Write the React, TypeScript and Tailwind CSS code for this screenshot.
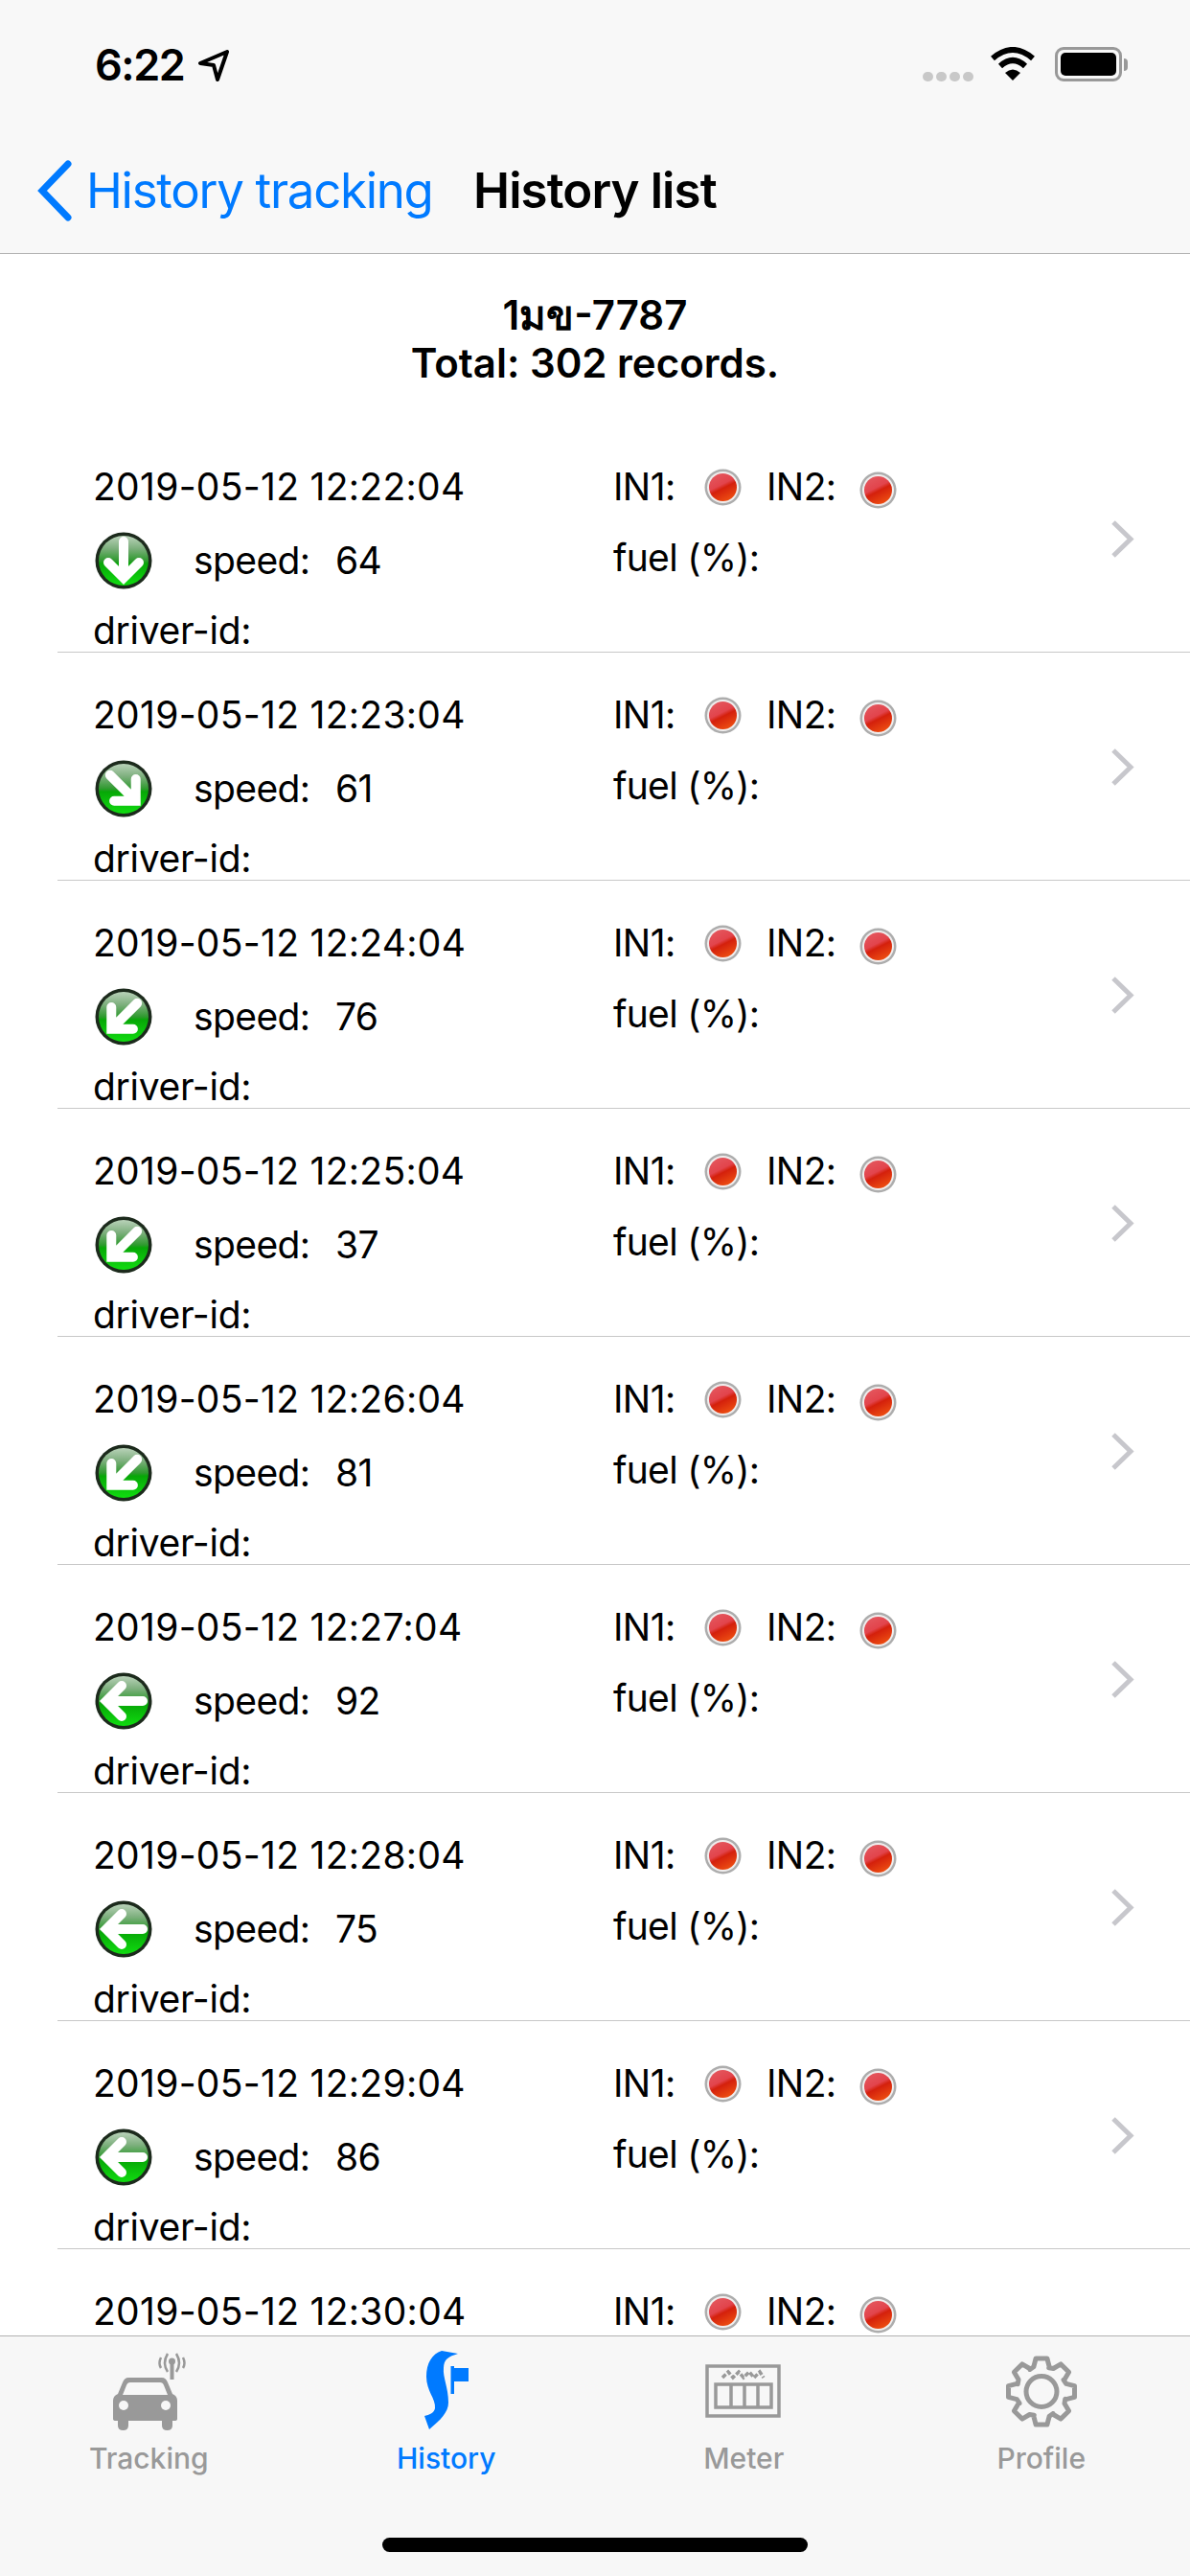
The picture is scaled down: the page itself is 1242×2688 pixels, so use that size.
import React from "react";

const rows = [
  { t: "12:22:04", s: 64, r: 0 },
  { t: "12:23:04", s: 61, r: -45 },
  { t: "12:24:04", s: 76, r: 45 },
  { t: "12:25:04", s: 37, r: 45 },
  { t: "12:26:04", s: 81, r: 45 },
  { t: "12:27:04", s: 92, r: 90 },
  { t: "12:28:04", s: 75, r: 90 },
  { t: "12:29:04", s: 86, r: 90 },
  { t: "12:30:04", s: 0, r: 0 },
];

function Dot() {
  return (
    <svg width="39" height="39" viewBox="0 0 39 39" className="shrink-0">
      <defs>
        <linearGradient id="redg" x1="0.2" y1="0" x2="0.7" y2="1">
          <stop offset="0" stopColor="#e4585f" />
          <stop offset="0.42" stopColor="#e2444c" />
          <stop offset="0.55" stopColor="#d4200c" />
          <stop offset="1" stopColor="#ee5012" />
        </linearGradient>
      </defs>
      <circle cx="19.5" cy="19.5" r="19" fill="#adadad" />
      <circle cx="19.5" cy="19.5" r="16.5" fill="#f0eeee" />
      <circle cx="19.5" cy="19.5" r="14.5" fill="url(#redg)" />
    </svg>
  );
}

function Badge({ rot }: { rot: number }) {
  return (
    <svg width="60" height="60" viewBox="0 0 60 60" className="shrink-0 ml-[2px]">
      <defs>
        <linearGradient id="greeng" x1="0" y1="0" x2="0" y2="1">
          <stop offset="0" stopColor="#b9d2b9" />
          <stop offset="0.25" stopColor="#7fb07f" />
          <stop offset="0.5" stopColor="#2f9a2f" />
          <stop offset="0.56" stopColor="#07a707" />
          <stop offset="1" stopColor="#10dc10" />
        </linearGradient>
      </defs>
      <circle cx="30" cy="30" r="29.5" fill="#1c2a1c" />
      <circle cx="30" cy="30" r="26" fill="url(#greeng)" />
      <g transform={`rotate(${rot} 30 30)`}>
        <path
          d="M30 10 V47 M14 32 L30 48 L46 32"
          fill="none"
          stroke="#ffffff"
          strokeWidth="10"
          strokeLinecap="round"
          strokeLinejoin="miter"
        />
      </g>
    </svg>
  );
}

function Chevron() {
  return (
    <svg width="25" height="41" viewBox="0 0 25 41" className="shrink-0">
      <path d="M3 3 L21 20.5 L3 38" fill="none" stroke="#c7c7cc" strokeWidth="5" />
    </svg>
  );
}

function Row({ t, s, r, partial }: { t: string; s: number; r: number; partial?: boolean }) {
  return (
    <div className="ml-[60px] h-[238px] border-b border-[#c8c8c8] pl-[37px] flex shrink-0">
      <div className="w-[543px] pt-[41px] flex flex-col shrink-0">
        <div className="h-[48px] flex items-center tracking-[0.3px]">2019-05-12 {t}</div>
        {!partial && (
          <>
            <div className="h-[60px] mt-[23px] flex items-center">
              <Badge rot={r} />
              <span className="ml-[43px] w-[148px]">speed:</span>
              <span>{s}</span>
            </div>
            <div className="h-[48px] mt-[19px] flex items-center tracking-[-0.3px]">driver-id:</div>
          </>
        )}
      </div>
      <div className="w-[519px] pt-[41px] flex flex-col shrink-0">
        <div className="h-[48px] flex items-center">
          <span className="w-[95px]">IN1:</span>
          <Dot />
          <span className="ml-[26px] w-[97px]">IN2:</span>
          <span className="mt-[6px]">
            <Dot />
          </span>
        </div>
        {!partial && <div className="h-[48px] mt-[26px] flex items-center tracking-[-0.7px]">fuel (%):</div>}
      </div>
      {!partial && (
        <div className="pt-[99px]">
          <Chevron />
        </div>
      )}
    </div>
  );
}

function Gear() {
  const pts: string[] = [];
  const n = 8;
  const cx = 38;
  const cy = 38.5;
  for (let i = 0; i < n; i++) {
    const a = (i * 2 * Math.PI) / n - Math.PI / 2;
    const w = 0.17;
    const w2 = 0.24;
    const seq: [number, number][] = [
      [27, a - 0.31],
      [35, a - w],
      [35, a + w],
      [27, a + 0.31],
      [26, a + Math.PI / n - w2 + 0.15],
    ];
    seq.forEach(([R, ang]) => {
      pts.push(`${(cx + R * Math.cos(ang)).toFixed(1)},${(cy + R * Math.sin(ang)).toFixed(1)}`);
    });
  }
  return (
    <svg width="76" height="77" viewBox="0 0 76 77">
      <polygon points={pts.join(" ")} fill="none" stroke="#999999" strokeWidth="5" strokeLinejoin="round" />
      <circle cx="38" cy="38.5" r="16" fill="none" stroke="#999999" strokeWidth="5" />
    </svg>
  );
}

export default function App() {
  return (
    <div className="w-[1242px] h-[2688px] flex flex-col overflow-hidden bg-white text-black text-[39px] font-['Inter',sans-serif] tracking-[-0.6px]">
      <header className="h-[265px] shrink-0 bg-[#f8f8f8] border-b border-[#b2b2b2] flex flex-col">
        <div className="h-[154px] shrink-0 pt-[44px] pl-[99px] pr-[65px] flex items-start justify-between">
          <div className="flex items-center h-[48px]">
            <span className="text-[45px] font-semibold tracking-[-1.5px]">6:22</span>
            <svg width="34" height="34" viewBox="0 0 34 34" className="ml-[14px]">
              <path d="M31 3 L3 15 L17 17 L21 32 Z" fill="none" stroke="#000" strokeWidth="4" strokeLinejoin="round" />
            </svg>
          </div>
          <div className="flex items-end h-[41px] mt-[6px]">
            <div className="flex gap-[3px] mb-[6px]">
              <span className="w-[11px] h-[10px] rounded-full bg-[#c8c8c8]" />
              <span className="w-[11px] h-[10px] rounded-full bg-[#c8c8c8]" />
              <span className="w-[11px] h-[10px] rounded-full bg-[#c8c8c8]" />
              <span className="w-[11px] h-[10px] rounded-full bg-[#c8c8c8]" />
            </div>
            <svg width="48" height="36" viewBox="0 0 48 36" className="ml-[17px] mb-[6px]">
              <path d="M3 12 Q24 -6 45 12" fill="none" stroke="#000" strokeWidth="6" />
              <path d="M11 20 Q24 8 37 20" fill="none" stroke="#000" strokeWidth="6" />
              <path d="M24 35 L16 27 Q24 20 32 27 Z" fill="#000" />
            </svg>
            <div className="ml-[20px] mb-[6px] flex items-center">
              <div className="w-[70px] h-[36px] rounded-[9px] border-[3px] border-[#999999] p-[3px]">
                <div className="w-full h-full rounded-[5px] bg-black" />
              </div>
              <div className="w-[4px] h-[13px] rounded-r-full bg-[#999999] ml-[2px]" />
            </div>
          </div>
        </div>
        <div className="flex items-center h-[90px] shrink-0 pl-[38px] text-[51px]">
          <svg width="38" height="64" viewBox="0 0 38 64" className="shrink-0">
            <path d="M33 4 L6 32 L33 60" fill="none" stroke="#007aff" strokeWidth="7" strokeLinecap="round" />
          </svg>
          <span className="ml-[14px] text-[#007aff] w-[404px] tracking-[-1.3px]">History tracking</span>
          <span className="font-semibold tracking-[-0.9px]">History list</span>
        </div>
      </header>

      <main className="flex-1 min-h-0 overflow-hidden flex flex-col">
        <div className="h-[178px] shrink-0 pt-[39px] flex flex-col items-center font-semibold text-[42px] tracking-[0px] leading-[50px]">
          <div className="font-['Inter','Noto_Sans_CJK_SC','DejaVu_Sans',sans-serif]">1มข-7787</div>
          <div>Total: 302 records.</div>
        </div>
        {rows.map((x, i) => (
          <Row key={x.t} t={x.t} s={x.s} r={x.r} partial={i === 8} />
        ))}
      </main>

      <footer className="h-[251px] shrink-0 relative bg-[#f7f7f7] border-t border-[#b2b2b2] grid grid-cols-4 text-[30px] font-medium tracking-[0px] text-[#999999]">
        <div className="flex flex-col items-center">
          <svg width="80" height="84" viewBox="0 0 80 84" className="mt-[15px]">
            <path d="M60 3 Q54 13 60 22 M53 7 Q50 13 53 18" fill="none" stroke="#999999" strokeWidth="2.5" />
            <path d="M69 3 Q75 13 69 22 M76 7 Q79 13 76 18" fill="none" stroke="#999999" strokeWidth="2.5" />
            <rect x="62.5" y="10" width="4" height="20" fill="#999999" />
            <circle cx="64.5" cy="11" r="3.5" fill="#999999" />
            <g transform="translate(3 28)">
              <path
                fillRule="evenodd"
                fill="#999999"
                d="M16 0 H51 Q55 0 57 5 L62 17 Q67 19 67 24 V43 Q67 45 64 45 H62 V50 Q62 55 56.500 55 Q51 55 51 50 V45 H16 V50 Q16 55 10.500 55 Q5 55 5 50 V45 H3 Q0 45 0 43 V24 Q0 19 5 17 L10 5 Q12 0 16 0 Z M18 5 Q15 5 14 8 L10 18 H57 L53 8 Q52 5 49 5 Z"
              />
              <circle cx="11" cy="29" r="5" fill="#f7f7f7" />
              <circle cx="55" cy="29" r="5" fill="#f7f7f7" />
            </g>
          </svg>
          <span className="mt-[6px]">Tracking</span>
        </div>
        <div className="flex flex-col items-center text-[#007aff]">
          <svg width="48" height="84" viewBox="0 0 48 84" className="mt-[15px]">
            <path
              fill="#007aff"
              d="M19 0 L36 3 C26 6 21 9 21 18 C20 28 26 38 26 54 C26 64 18 72 6 82 L1 68 C6 67 11 65 12 60 C13 50 3 42 3 27 C3 13 9 3 19 0 Z"
            />
            <rect x="28.500" y="16" width="3.500" height="29" fill="#007aff" />
            <rect x="32" y="18" width="15" height="14" fill="#007aff" />
          </svg>
          <span className="mt-[6px]">History</span>
        </div>
        <div className="flex flex-col items-center">
          <svg width="80" height="84" viewBox="0 0 80 84" className="mt-[15px]">
            <g fill="none" stroke="#999999">
              <rect x="2" y="16" width="75" height="52" strokeWidth="3.500" />
              <rect x="11" y="35" width="58" height="24" strokeWidth="3.500" />
              <path d="M27 36 V58 M41 36 V58 M55 36 V58" strokeWidth="3.500" />
              <path d="M18 28 L24 22 L29 28 L35 22 L40 28 L46 22 L51 28 L57 22 L61 28" strokeWidth="3.500" strokeDasharray="5 2" />
            </g>
          </svg>
          <span className="mt-[6px]">Meter</span>
        </div>
        <div className="flex flex-col items-center">
          <div className="mt-[19px] h-[80px]">
            <Gear />
          </div>
          <span className="mt-[6px]">Profile</span>
        </div>
        <div className="absolute left-[399px] top-[210px] w-[444px] h-[15px] rounded-full bg-black" />
      </footer>
    </div>
  );
}
